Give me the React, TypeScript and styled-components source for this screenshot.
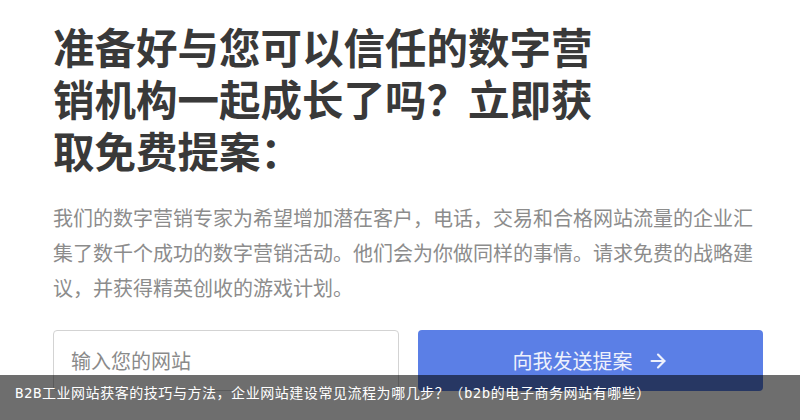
import styled, { createGlobalStyle } from "styled-components";
import { ArrowRight } from "lucide-react";

const GlobalStyle = createGlobalStyle`
    html, body {
        margin: 0;
        padding: 0;
        background: #ffffff;
        font-family: "Noto Sans CJK SC", "Noto Sans", sans-serif;
    }
`;

const Page = styled.div`
    position: relative;
    width: 800px;
    height: 420px;
    overflow: hidden;
    background: #ffffff;
`;

const Content = styled.div`
    width: 710px;
    padding: 20px 0 0 53px;
`;

const Title = styled.h1`
    width: 550px;
    margin: 0;
    font-size: 41.5px;
    line-height: 52px;
    font-weight: 700;
    color: #393939;
`;

const Intro = styled.p`
    margin: 24px 0 0;
    font-size: 20px;
    line-height: 35px;
    color: #8c8c8c;
`;

const Form = styled.form`
    display: grid;
    grid-template-columns: 346px 345px;
    gap: 19px;
    margin-top: 25px;
`;

const Input = styled.input`
    box-sizing: border-box;
    height: 61px;
    padding: 0 17px;
    border: 1px solid #d3d3d3;
    border-radius: 4px;
    font-family: inherit;
    font-size: 20px;
    color: #333;
    outline: none;

    &::placeholder {
        color: #8a8a8a;
    }
`;

const SubmitBtn = styled.button`
    display: flex;
    align-items: center;
    justify-content: center;
    gap: 14px;
    height: 61px;
    border: 0;
    border-radius: 4px;
    background-color: #5b7fe6;
    color: #eef1fc;
    font-family: inherit;
    font-size: 20px;
    cursor: pointer;
`;

const Caption = styled.div`
    position: absolute;
    left: 0;
    right: 0;
    bottom: 0;
    box-sizing: border-box;
    height: 45px;
    padding: 8px 0 0 15px;
    background: rgba(0, 0, 0, 0.57);
    color: #ffffff;
    font-family: "DejaVu Sans Mono", "Noto Sans CJK SC", monospace;
    font-size: 14px;
    font-weight: 400;
    letter-spacing: 0.55px;
    line-height: 20px;
    white-space: nowrap;
`;

function App() {
    return (
        <Page>
            <GlobalStyle />
            <Content>
                <Title>准备好与您可以信任的数字营销机构一起成长了吗？立即获取免费提案：</Title>
                <Intro>
                    我们的数字营销专家为希望增加潜在客户，电话，交易和合格网站流量的企业汇集了数千个成功的数字营销活动。他们会为你做同样的事情。请求免费的战略建议，并获得精英创收的游戏计划。
                </Intro>
                <Form onSubmit={(e) => e.preventDefault()}>
                    <Input placeholder="输入您的网站" />
                    <SubmitBtn type="submit">
                        向我发送提案
                        <ArrowRight size={22} strokeWidth={2.4} />
                    </SubmitBtn>
                </Form>
            </Content>
            <Caption>B2B工业网站获客的技巧与方法，企业网站建设常见流程为哪几步？（b2b的电子商务网站有哪些）</Caption>
        </Page>
    );
}

export default App;
